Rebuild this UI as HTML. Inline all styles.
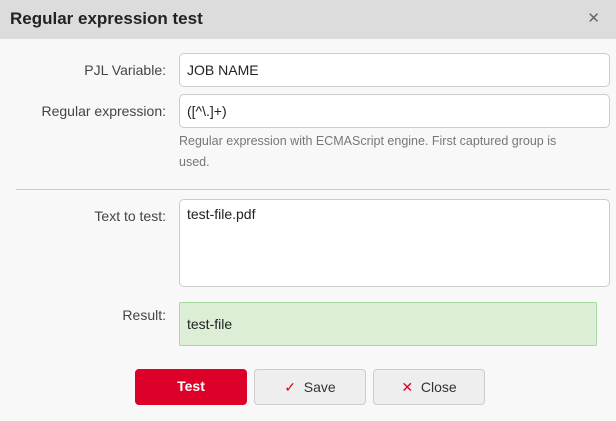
<!DOCTYPE html><html><head><style>
*{box-sizing:border-box;margin:0;padding:0}
body{width:616px;height:421px;background:#f8f8f8;font-family:"Liberation Sans",sans-serif;color:#333;position:relative;overflow:hidden}
.hd{position:absolute;left:0;top:0;width:616px;height:39px;background:#dcdcdc;}
.hd b{position:absolute;left:10px;top:9px;font-size:17px;color:#222}
.x{position:absolute;right:16px;top:9px;font-size:15px;color:#666}
.lbl{position:absolute;right:450px;font-size:14px;color:#444;text-align:right;white-space:nowrap}
.in{position:absolute;left:179px;width:431px;background:#fff;border:1px solid #ccc;border-radius:5px;font-size:14px;padding:0 7px;color:#222}
.help{position:absolute;left:179px;top:131px;font-size:12.5px;color:#777;line-height:21px;width:430px;white-space:nowrap}
.hr{position:absolute;left:16px;top:189px;width:594px;border-top:1px solid #ccc}
.btn{position:absolute;top:369px;height:36px;border-radius:4px;font-size:14px;text-align:center;line-height:35px}
</style></head><body>
<div class="hd"><b>Regular expression test</b><span class="x">✕</span></div>
<div class="lbl" style="top:62px">PJL Variable:</div>
<div class="in" style="top:53px;height:34px;line-height:33px">JOB NAME</div>
<div class="lbl" style="top:103px">Regular expression:</div>
<div class="in" style="top:94px;height:34px;line-height:33px">([^\.]+)</div>
<div class="help">Regular expression with ECMAScript engine. First captured group is<br>used.</div>
<div class="hr"></div>
<div class="lbl" style="top:208px">Text to test:</div>
<div class="in" style="top:199px;height:88px;padding-top:6px">test-file.pdf</div>
<div class="lbl" style="top:307px">Result:</div>
<div class="in" style="top:302px;height:44px;width:418px;line-height:43px;background:#dcefd6;border-color:#a8d9a0;border-radius:2px">test-file</div>
<div class="btn" style="left:135px;width:112px;background:#dd0028;color:#fff;font-weight:bold">Test</div>
<div class="btn" style="left:254px;width:112px;background:#eee;border:1px solid #ccc;color:#333"><span style="color:#dd0028">✓</span>&nbsp;&nbsp;Save</div>
<div class="btn" style="left:373px;width:112px;background:#eee;border:1px solid #ccc;color:#333"><span style="color:#dd0028">✕</span>&nbsp;&nbsp;Close</div>
</body></html>
